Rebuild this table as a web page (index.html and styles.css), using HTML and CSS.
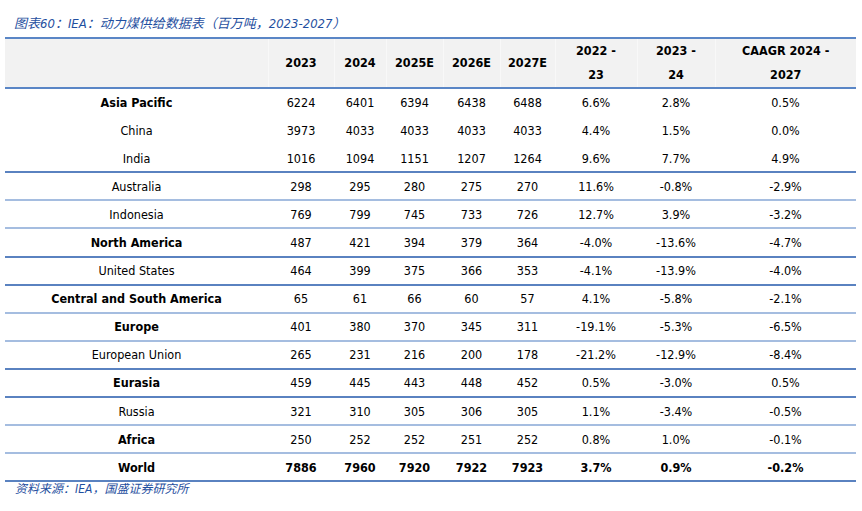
FILE: index.html
```html
<!DOCTYPE html>
<html lang="zh">
<head>
<meta charset="utf-8">
<link rel="stylesheet" href="styles.css">
</head>
<body>
<div class="page">
  <div class="caption">图表60：IEA：动力煤供给数据表（百万吨，2023-2027）</div>
  <table class="data">
    <colgroup>
      <col class="c-label"><col class="c-2023"><col class="c-2024"><col class="c-2025"><col class="c-2026"><col class="c-2027"><col class="c-g1"><col class="c-g2"><col class="c-g3">
    </colgroup>
    <thead>
      <tr>
        <th></th><th>2023</th><th>2024</th><th>2025E</th><th>2026E</th><th>2027E</th><th>2022 -<br>23</th><th>2023 -<br>24</th><th>CAAGR 2024 -<br>2027</th>
      </tr>
    </thead>
    <tbody>
      <tr class="b none"><td>Asia Pacific</td><td>6224</td><td>6401</td><td>6394</td><td>6438</td><td>6488</td><td>6.6%</td><td>2.8%</td><td>0.5%</td></tr>
      <tr class="none"><td>China</td><td>3973</td><td>4033</td><td>4033</td><td>4033</td><td>4033</td><td>4.4%</td><td>1.5%</td><td>0.0%</td></tr>
      <tr class="dark"><td>India</td><td>1016</td><td>1094</td><td>1151</td><td>1207</td><td>1264</td><td>9.6%</td><td>7.7%</td><td>4.9%</td></tr>
      <tr class="light"><td>Australia</td><td>298</td><td>295</td><td>280</td><td>275</td><td>270</td><td>11.6%</td><td>-0.8%</td><td>-2.9%</td></tr>
      <tr class="light"><td>Indonesia</td><td>769</td><td>799</td><td>745</td><td>733</td><td>726</td><td>12.7%</td><td>3.9%</td><td>-3.2%</td></tr>
      <tr class="b dark"><td>North America</td><td>487</td><td>421</td><td>394</td><td>379</td><td>364</td><td>-4.0%</td><td>-13.6%</td><td>-4.7%</td></tr>
      <tr class="dark"><td>United States</td><td>464</td><td>399</td><td>375</td><td>366</td><td>353</td><td>-4.1%</td><td>-13.9%</td><td>-4.0%</td></tr>
      <tr class="b light"><td>Central and South America</td><td>65</td><td>61</td><td>66</td><td>60</td><td>57</td><td>4.1%</td><td>-5.8%</td><td>-2.1%</td></tr>
      <tr class="b light"><td>Europe</td><td>401</td><td>380</td><td>370</td><td>345</td><td>311</td><td>-19.1%</td><td>-5.3%</td><td>-6.5%</td></tr>
      <tr class="dark"><td>European Union</td><td>265</td><td>231</td><td>216</td><td>200</td><td>178</td><td>-21.2%</td><td>-12.9%</td><td>-8.4%</td></tr>
      <tr class="b dark"><td>Eurasia</td><td>459</td><td>445</td><td>443</td><td>448</td><td>452</td><td>0.5%</td><td>-3.0%</td><td>0.5%</td></tr>
      <tr class="light"><td>Russia</td><td>321</td><td>310</td><td>305</td><td>306</td><td>305</td><td>1.1%</td><td>-3.4%</td><td>-0.5%</td></tr>
      <tr class="b light"><td>Africa</td><td>250</td><td>252</td><td>252</td><td>251</td><td>252</td><td>0.8%</td><td>1.0%</td><td>-0.1%</td></tr>
      <tr class="b all dark"><td>World</td><td>7886</td><td>7960</td><td>7920</td><td>7922</td><td>7923</td><td>3.7%</td><td>0.9%</td><td>-0.2%</td></tr>
    </tbody>
  </table>
  <div class="source">资料来源：IEA，国盛证券研究所</div>
</div>
</body>
</html>
```

FILE: styles.css
```css
html, body {
  margin: 0;
  padding: 0;
  background: #ffffff;
}

.page {
  width: 862px;
  height: 511px;
  padding: 15px 5px 0 5px;
  box-sizing: border-box;
  font-family: "DejaVu Sans Condensed", "DejaVu Sans", "Noto Sans CJK SC", sans-serif;
  color: #000;
}

.caption {
  font-family: "DejaVu Sans Condensed", "Noto Sans CJK SC", sans-serif;
  font-style: italic;
  font-size: 13px;
  line-height: 18px;
  color: #1f4fa0;
  padding-left: 9px;
  height: 22px;
}

.data {
  border-collapse: collapse;
  width: 851px;
  table-layout: fixed;
  font-size: 12.5px;
}

.c-label { width: 263px; }
.c-2023 { width: 66px; }
.c-2024 { width: 52px; }
.c-2025 { width: 57px; }
.c-2026 { width: 57px; }
.c-2027 { width: 55px; }
.c-g1 { width: 82px; }
.c-g2 { width: 78px; }
.c-g3 { width: 141px; }

.data thead tr {
  background: #f2f2f2;
  border-top: 2px solid #5a86c6;
  border-bottom: 2px solid #5a86c6;
}

.data th {
  height: 41px;
  padding: 0;
  font-weight: bold;
  line-height: 24px;
  text-align: center;
  vertical-align: middle;
  border-left: 1px solid #f8f8f8;
}

.data th:first-child {
  border-left: none;
}

.data td {
  height: 26.1px;
  padding: 0;
  text-align: center;
  vertical-align: middle;
  white-space: nowrap;
}

.data tr.b td:first-child {
  font-weight: bold;
}

.data tr.all td {
  font-weight: bold;
}

.data tr.dark {
  border-bottom: 2px solid #5a82c0;
}

.data tr.light {
  border-bottom: 2px solid #a5bde0;
}

.data tr.none {
  border-bottom: 2px solid transparent;
}

.source {
  font-family: "DejaVu Sans Condensed", "Noto Sans CJK SC", sans-serif;
  font-style: italic;
  font-size: 12px;
  line-height: 14px;
  color: #1f4fa0;
  padding-left: 10px;
  margin-top: 0;
}
```
